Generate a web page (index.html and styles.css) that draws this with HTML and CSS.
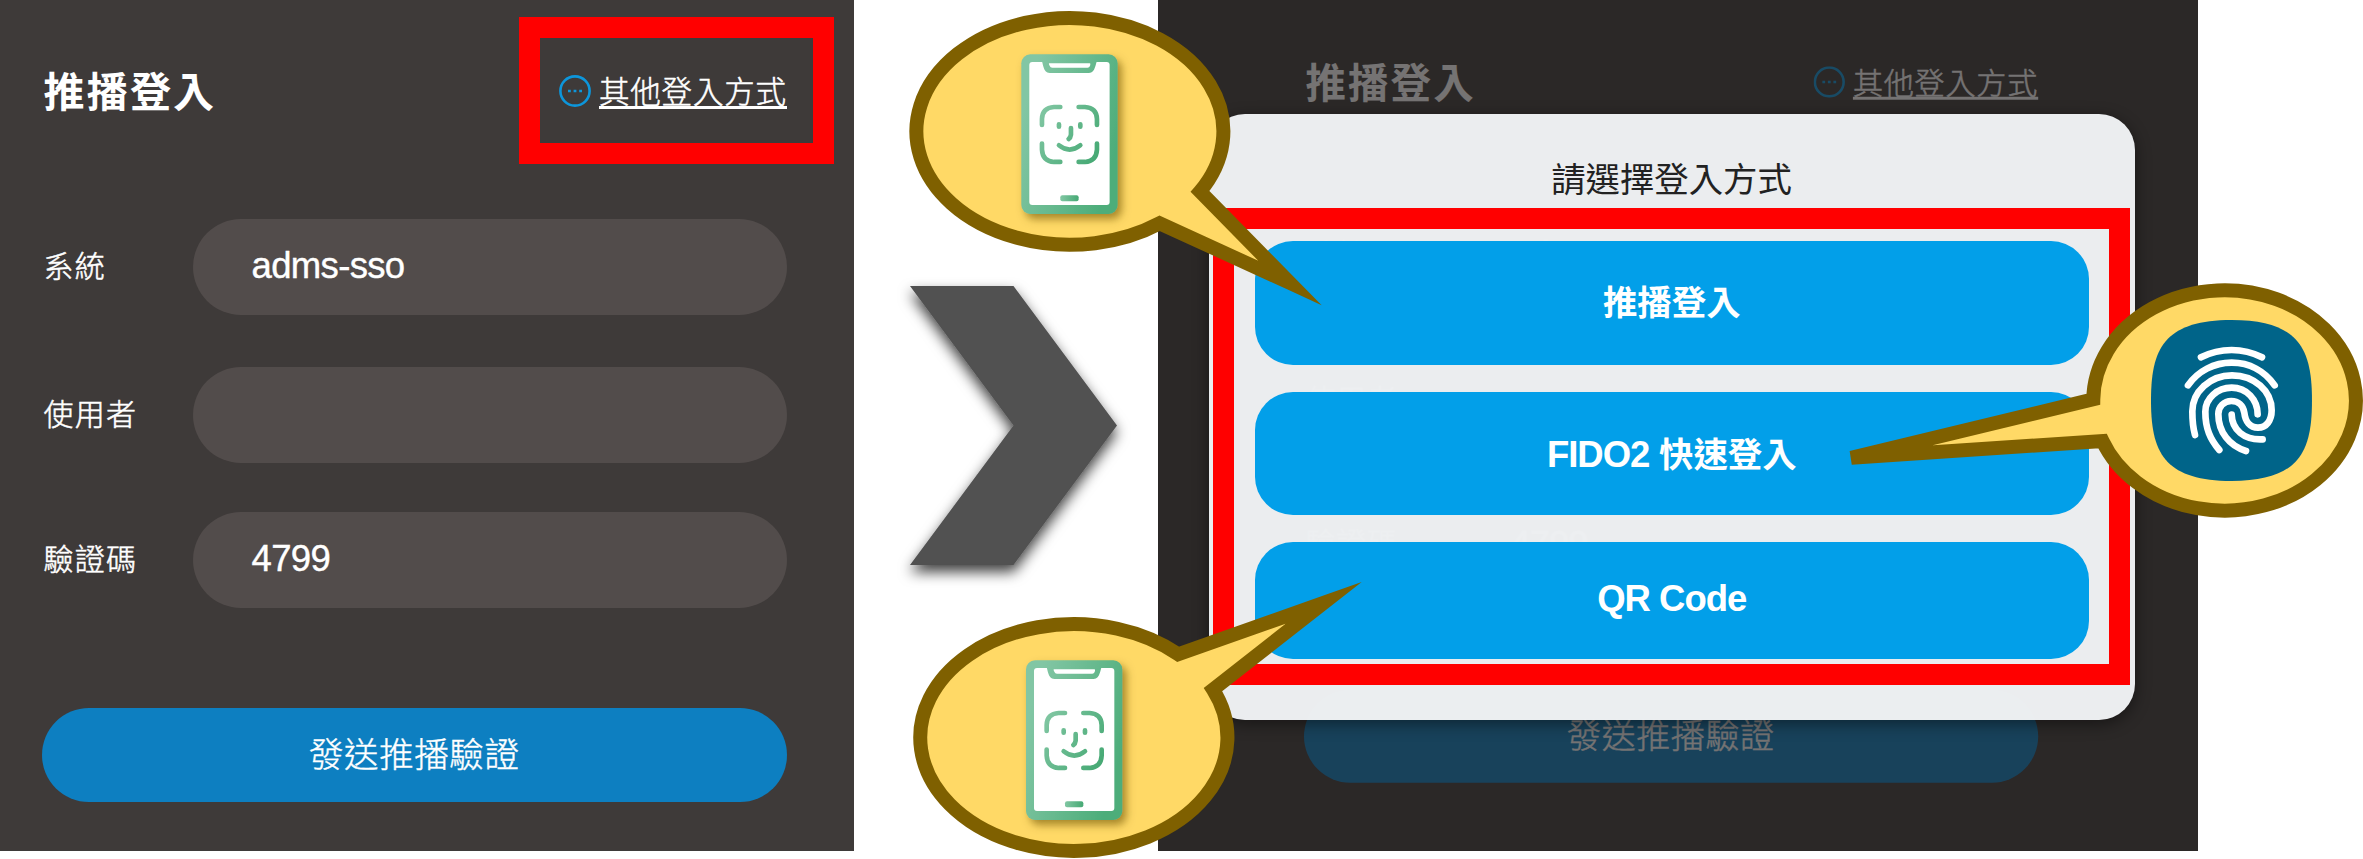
FILE: index.html
```html
<!DOCTYPE html>
<html lang="zh-Hant">
<head>
<meta charset="utf-8">
<title>推播登入</title>
<link rel="stylesheet" href="styles.css">
</head>
<body>
<main class="guide">
  <section class="panel">
    <form class="login">
      <header class="login-head">
        <h1 class="title">推播登入</h1>
        <a class="other">
          <svg class="dots" viewBox="0 0 32 32"><circle cx="16" cy="16" r="14.6"/><path d="M9 16h2.8M14.600 16h2.8M20.200 16h2.8"/></svg>
          <span class="other-text">其他登入方式</span>
        </a>
      </header>
      <div class="row"><span class="label">系統</span><div class="field">adms-sso</div></div>
      <div class="row row-user"><span class="label">使用者</span><div class="field"></div></div>
      <div class="row row-code"><span class="label">驗證碼</span><div class="field">4799</div></div>
      <div class="send">發送推播驗證</div>
    </form>
    <div class="mark mark-link"></div>
  </section>

  <section class="panel panel-choose">
    <form class="login login-back">
      <header class="login-head">
        <h1 class="title">推播登入</h1>
        <a class="other">
          <svg class="dots" viewBox="0 0 32 32"><circle cx="16" cy="16" r="14.6"/><path d="M9 16h2.8M14.600 16h2.8M20.200 16h2.8"/></svg>
          <span class="other-text">其他登入方式</span>
        </a>
      </header>
      <div class="row"><span class="label">系統</span><div class="field">adms-sso</div></div>
      <div class="row row-user"><span class="label">使用者</span><div class="field"></div></div>
      <div class="row row-code"><span class="label">驗證碼</span><div class="field">4799</div></div>
      <div class="send">發送推播驗證</div>
    </form>
    <div class="shade"></div>
    <div class="dialog">
      <h2 class="dialog-title">請選擇登入方式</h2>
      <div class="choices">
        <div class="choice">推播登入</div>
        <div class="choice"><span class="latin">FIDO2</span> 快速登入</div>
        <div class="choice choice-qr"><span class="latin">QR Code</span></div>
      </div>
    </div>
  </section>

  <svg class="callouts" viewBox="0 0 2363 859">
    <defs>
      <linearGradient id="green" gradientUnits="userSpaceOnUse" x1="0" y1="190" x2="289" y2="270">
        <stop offset="0" stop-color="#82c6a4"/><stop offset="1" stop-color="#4dad7a"/>
      </linearGradient>
      <linearGradient id="greenFace" gradientUnits="userSpaceOnUse" x1="50" y1="180" x2="240" y2="290">
        <stop offset="0" stop-color="#80c6a2"/><stop offset="1" stop-color="#46a974"/>
      </linearGradient>
      <linearGradient id="greenBar" gradientUnits="userSpaceOnUse" x1="118" y1="0" x2="172" y2="0">
        <stop offset="0" stop-color="#80c6a2"/><stop offset="1" stop-color="#46a974"/>
      </linearGradient>
      <g id="phone">
        <rect width="289" height="479" rx="27" fill="url(#green)"/>
        <rect x="24" y="23" width="241" height="429" rx="9" fill="#fff"/>
        <path d="M60 18C66 24 64 56 85 56H203C224 56 222 24 229 18Z" fill="url(#green)"/>
        <path d="M84 27H205Q208 27 207 31L206 35Q204 40 199 40H93Q87 40 85 34L83 30Q82 27 84 27Z" fill="#fff"/>
        <g fill="none" stroke="url(#greenFace)" stroke-width="14" stroke-linecap="round">
          <path d="M117 158H98Q63 160 62 194V212M172 158H191Q226 160 227 194V212M62 268V286Q64 321 98 323H117M227 268V286Q225 321 191 323H172"/>
          <path d="M113 210v7M177 210v7M149 221V241Q148 250 142 254M113 273Q145 299 177 273"/>
        </g>
        <rect x="117" y="423" width="55" height="18" rx="6" fill="url(#greenBar)"/>
      </g>
      <filter id="arrowShadow" x="-20%" y="-20%" width="140%" height="140%">
        <feDropShadow dx="0" dy="7" stdDeviation="7" flood-color="#000" flood-opacity=".75"/>
      </filter>
      <filter id="phoneShadow" x="-30%" y="-30%" width="160%" height="160%">
        <feDropShadow dx="4" dy="5" stdDeviation="4.5" flood-color="#6b5000" flood-opacity=".6"/>
      </filter>
    </defs>

    <path d="M910 286H1013.500L1117 425.500L1013.500 565H910L1013.500 425.500Z" fill="#515151" filter="url(#arrowShadow)"/>

    <g class="bubble">
      <path d="M1290 283L1159.700 223.300A153.500 113.400 0 1 1 1200 191.500Z"/>
      <path d="M1323.700 602.800L1178.200 654.300A153.600 113.400 0 1 0 1213 689.500Z"/>
      <path d="M1851.300 457.700L2093.300 399.300A131.300 110.200 0 1 1 2102.500 441Z"/>
    </g>

    <g filter="url(#phoneShadow)"><use href="#phone" transform="translate(1021.300 54.300) scale(.3333)"/></g>
    <g filter="url(#phoneShadow)"><use href="#phone" transform="translate(1026 660.300) scale(.3333)"/></g>

    <g transform="translate(2130 300) scale(.3333)">
      <path d="M304.500 60C400 60 460 80 496 117C532 155 546 210 546 301.500C546 393 532 448 496 486C460 523 400 543 304.500 543C209 543 149 523 113 486C77 448 63 393 63 301.500C63 210 77 155 113 117C149 80 209 60 304.500 60Z" fill="#006489"/>
      <g fill="none" stroke="#fff" stroke-width="20" stroke-linecap="round">
        <path d="M213 172Q256 150 305 150Q353 150 396 172"/>
        <path d="M174 256C204 213 252 188 305 188C358 188 404 213 434 256"/>
        <path d="M195 405C187 376 187 354 187 334C187 275 240 226 306 226C373 226 425 273 425 331C425 362 409 383 384 383C360 383 346 365 343 338C340 317 325 303 304 303C282 303 265 320 265 342C265 396 298 438 348 453"/>
        <path d="M268 450C241 418 226 386 226 335C226 295 262 263 305 263C350 263 383 299 383 343"/>
        <path d="M305 344C306 389 342 421 398 418"/>
      </g>
    </g>
  </svg>
</main>
</body>
</html>
```
FILE: styles.css
```css
* { box-sizing: border-box; }

body {
  margin: 0;
  background: #fff;
  font-family: "Liberation Sans", "Noto Sans CJK TC", sans-serif;
}

.guide {
  position: relative;
  display: flex;
  gap: 304px;
  width: 2363px;
  height: 859px;
  overflow: hidden;
}

.panel {
  position: relative;
  flex: none;
  width: 854px;
  height: 851px;
  background: #3e3a39;
  overflow: hidden;
}

.panel-choose {
  display: flex;
  justify-content: center;
  width: 1040px;
}

.login {
  display: flex;
  flex-direction: column;
  width: 854px;
  height: 851px;
  padding: 0 67.5px 0 42px;
  color: #fff;
}

.login-back {
  position: absolute;
  left: 0;
  top: 0;
  transform-origin: 0 0;
  transform: translate(104.600px, -7.700px) scale(.9855);
}

.login-head {
  display: flex;
  align-items: center;
  justify-content: space-between;
  height: 182px;
  margin-bottom: 37px;
}

.title {
  margin: 0;
  padding: 3px 0 0 1.5px;
  font-size: 41px;
  line-height: 60px;
  font-weight: 700;
  letter-spacing: 2.200px;
}

.other {
  display: flex;
  align-items: center;
  gap: 8px;
}

.dots {
  width: 32px;
  height: 32px;
  fill: none;
  stroke: #0d96db;
  stroke-width: 2.6;
}

.other-text {
  width: 187.500px;
  height: 36px;
  border-bottom: 3px solid #fff;
  font-family: "Noto Sans CJK TC", sans-serif;
  font-size: 30.500px;
  font-weight: 300;
  letter-spacing: .8px;
  line-height: 35px;
  -webkit-text-stroke: .5px currentColor;
  white-space: nowrap;
}

.row {
  display: flex;
  align-items: center;
  height: 96px;
}

.row-user { margin-top: 52px; }
.row-code { margin-top: 49px; }

.label {
  width: 150.500px;
  padding-left: 1.5px;
  font-size: 30px;
  font-weight: 300;
  letter-spacing: 1.200px;
  line-height: 40px;
  padding-bottom: 1px;
  -webkit-text-stroke: .5px currentColor;
}

.field {
  flex: 1;
  height: 96px;
  padding-left: 59px;
  border-radius: 48px;
  background: #524c4b;
  font-size: 36.500px;
  letter-spacing: -.65px;
  line-height: 94px;
  -webkit-text-stroke: .4px currentColor;
}

.send {
  height: 94px;
  margin-top: 100px;
  border-radius: 47px;
  background: #0d7fc1;
  font-size: 34.500px;
  font-weight: 300;
  letter-spacing: .6px;
  line-height: 95px;
  text-align: center;
  -webkit-text-stroke: .4px currentColor;
}

.mark {
  position: absolute;
  border: 21px solid #f00;
}

.mark-link {
  left: 519px;
  top: 17px;
  width: 315px;
  height: 147px;
}

.shade {
  position: absolute;
  inset: 0;
  background: rgba(33, 29, 29, .62);
}

.dialog {
  position: relative;
  width: 926px;
  height: 606px;
  margin: 114px 0 0 -12px;
  padding: 0 5px 0 4px;
  border-radius: 36px;
  background: rgba(239, 241, 243, .985);
  box-shadow: 0 4px 16px rgba(0, 0, 0, .45);
}

.dialog-title {
  height: 94px;
  margin: 0;
  padding-top: 31px;
  color: #222;
  font-size: 34.400px;
  font-weight: 400;
  line-height: 70px;
  text-align: center;
}

.choices {
  display: flex;
  flex-direction: column;
  gap: 27px;
  height: 477px;
  padding: 12px 20.500px 0 21px;
  border: 21px solid #f00;
}

.choice {
  flex: none;
  height: 123.500px;
  border-radius: 38px;
  background: #029fe9;
  color: #fff;
  font-size: 34.400px;
  font-weight: 700;
  line-height: 125px;
  text-align: center;
}

.choice-qr {
  height: 117px;
  line-height: 113px;
}

.latin {
  font-size: 36.500px;
  letter-spacing: -1px;
}

.callouts {
  position: absolute;
  left: 0;
  top: 0;
  width: 2363px;
  height: 859px;
}

.bubble {
  fill: #ffd966;
  stroke: #7f6000;
  stroke-width: 14;
  stroke-miterlimit: 8;
}
```
